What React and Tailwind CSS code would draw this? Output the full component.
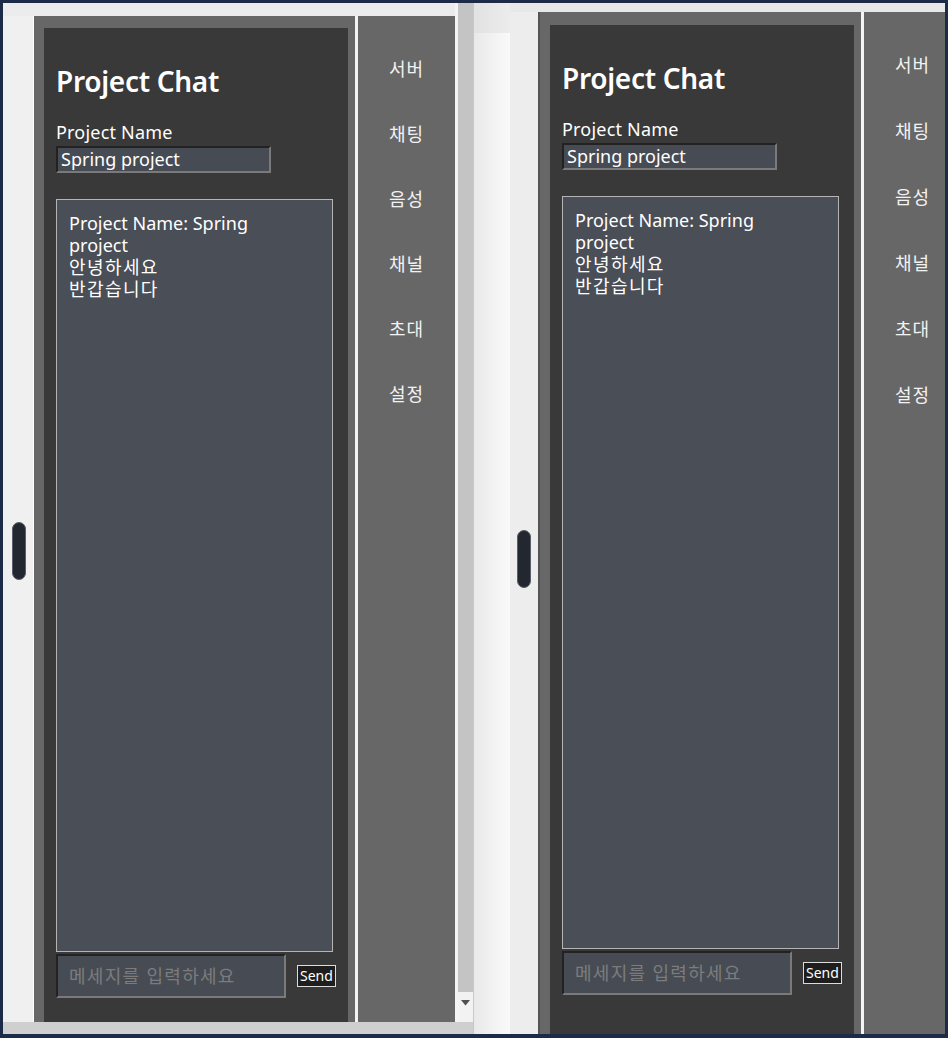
const FONT = {
  fontFamily: '"Noto Sans", "Noto Sans CJK KR", sans-serif',
};

const MENU = ["서버", "채팅", "음성", "채널", "초대", "설정"];

function ScrollPill({ top }) {
  return (
    <div
      className="w-[14px] h-[58px] rounded-full bg-[#23272f] border border-[#5a5e66]"
      style={{ marginTop: top }}
    />
  );
}

function ChatApp({ padTop, menuGap }) {
  return (
    <div className="flex h-full" style={FONT}>
      <div
        className="w-[321px] shrink-0 bg-[#676767] pl-[10px] pr-[11px] flex"
        style={{ paddingTop: padTop }}
      >
        <div className="flex-1 bg-[#393939] px-[12px] pt-[35px] flex flex-col">
          <h1 className="text-[28px] leading-[36px] font-semibold text-white tracking-[-0.3px]">
            Project Chat
          </h1>
          <label className="mt-[22px] text-[18px] leading-[22px] text-white tracking-[0.2px]">
            Project Name
          </label>
          <div className="mt-[3px] w-[215px] h-[27px] bg-[#474c54] border-2 border-t-[#222] border-l-[#222] border-b-[#7a7a7a] border-r-[#7a7a7a] pl-[3px] text-[18px] leading-[22px] text-white">
            Spring project
          </div>
          <div className="mt-[26px] w-[277px] h-[753px] bg-[#4a4e56] border border-[#b4b4b4] pl-[12px] pr-[24px] pt-[12px] text-[18px] leading-[22px] text-white">
            <p>Project Name: Spring project</p>
            <p className="tracking-[1.4px]">안녕하세요</p>
            <p className="tracking-[1.4px]">반갑습니다</p>
          </div>
          <div className="mt-[2px] flex items-center">
            <div className="w-[230px] h-[44px] bg-[#474c54] border-2 border-t-[#222] border-l-[#222] border-b-[#7a7a7a] border-r-[#7a7a7a] pl-[11px] flex items-center text-[18px] tracking-[1.3px] text-[#7c7c7c]">
              메세지를 입력하세요
            </div>
            <button className="ml-[11px] h-[22px] px-[2px] bg-[#1e1e1e] border border-[#dcdcdc] text-[14px] leading-[18px] text-white">
              Send
            </button>
          </div>
        </div>
      </div>
      <div className="w-[3px] shrink-0 bg-[#f4f4f4]" />
      <div
        className="w-[97px] shrink-0 bg-[#676767] flex flex-col items-center pt-[41px]"
        style={{ gap: menuGap }}
      >
        {MENU.map((m) => (
          <span
            key={m}
            className="text-[18px] leading-[24px] tracking-[1px] text-[#f2f2f2]"
          >
            {m}
          </span>
        ))}
      </div>
    </div>
  );
}

function LeftWindow() {
  return (
    <div className="w-[470px] shrink-0 flex flex-col bg-[#f0f0f0]">
      <div className="h-[1019px] flex">
        <div className="flex-1 flex flex-col">
          <div className="h-[13px] bg-[#ececec]" />
          <div className="flex-1 flex">
            <div className="w-[31px] shrink-0 pl-[9px] border-r border-white">
              <ScrollPill top={506} />
            </div>
            <div className="flex-1 overflow-hidden">
              <ChatApp padTop={12} menuGap={41} />
            </div>
          </div>
        </div>
        <div className="w-[18px] shrink-0 flex flex-col border-l-[3px] border-[#f4f4f4]">
          <div className="flex-1 bg-[#c4c4c4]" />
          <div className="h-[30px] bg-[#f2f2f2] rounded-br-[6px] flex items-start justify-center pt-[8px]">
            <svg width="9" height="6" viewBox="0 0 9 6">
              <path d="M0 0h9L4.5 5.5z" fill="#505050" />
            </svg>
          </div>
        </div>
      </div>
      <div className="flex-1 bg-[#cfcfcf]" />
    </div>
  );
}

function RightWindow() {
  return (
    <div className="flex-1 flex overflow-hidden">
      <div className="w-[37px] shrink-0 flex flex-col border-l border-[#c8c8c8]">
        <div className="h-[30px] bg-linear-to-r from-[#e2e2e2] to-[#ececec]" />
        <div className="flex-1 bg-linear-to-r from-[#e9e9e9] to-[#fafafa]" />
      </div>
      <div className="w-[28px] shrink-0 bg-[#ededed] flex flex-col">
        <div className="h-[9px] bg-[#e8e8e8]" />
        <div className="pl-[7px]">
          <ScrollPill top={518} />
        </div>
      </div>
      <div className="flex-1 flex flex-col overflow-hidden">
        <div className="h-[9px] shrink-0 bg-[#e8e8e8]" />
        <div className="flex-1 border-l-2 border-[#555] overflow-hidden">
          <ChatApp padTop={13} menuGap={42} />
        </div>
      </div>
    </div>
  );
}

export default function App() {
  return (
    <div className="w-[948px] h-[1038px] border-[3px] border-b-[4px] border-[#1b2b48] bg-[#f0f0f0] flex overflow-hidden">
      <LeftWindow />
      <RightWindow />
    </div>
  );
}
